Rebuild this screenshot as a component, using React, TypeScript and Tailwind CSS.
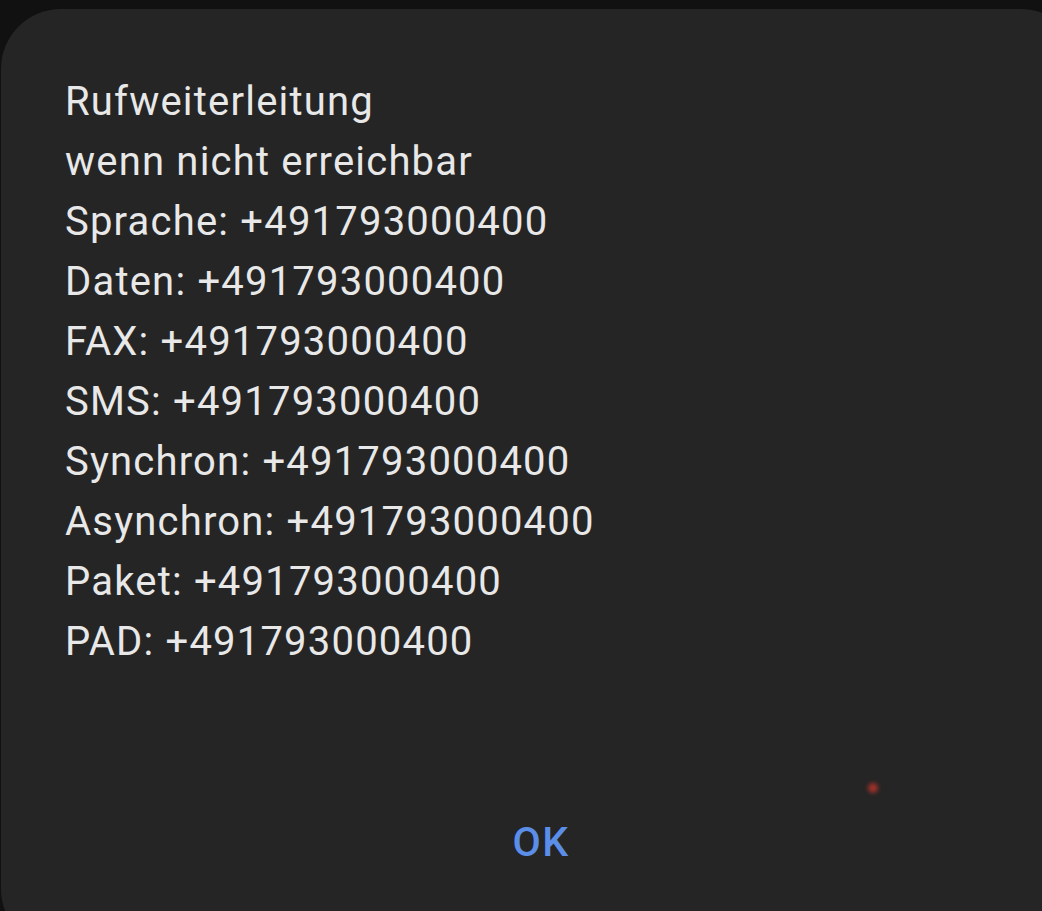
export default function App() {
  const lines = [
    'Rufweiterleitung',
    'wenn nicht erreichbar',
    'Sprache: +491793000400',
    'Daten: +491793000400',
    'FAX: +491793000400',
    'SMS: +491793000400',
    'Synchron: +491793000400',
    'Asynchron: +491793000400',
    'Paket: +491793000400',
    'PAD: +491793000400',
  ]

  return (
    <div className="h-[911px] w-[1042px] overflow-hidden bg-[#111111] pt-[9px]" style={{ fontFamily: 'Roboto, sans-serif' }}>
      <div className="relative ml-px w-[1080px] h-[940px] rounded-[60px] bg-[#252525]">
        <div className="pt-[63px] pl-[64px] text-[40px] leading-[60px] tracking-[1.2px] text-[#e8e8e8]">
          {lines.map((l) => (
            <div key={l}>{l}</div>
          ))}
        </div>
        <div className="mt-[147px] flex justify-center">
          <button className="text-[41px] font-medium leading-[47px] tracking-[1.5px] text-[#5b8ee8]">OK</button>
        </div>
        <span className="absolute left-[867px] top-[774px] h-[10px] w-[10px] rounded-full bg-[#a0322a] blur-[2px]" />
      </div>
    </div>
  )
}
